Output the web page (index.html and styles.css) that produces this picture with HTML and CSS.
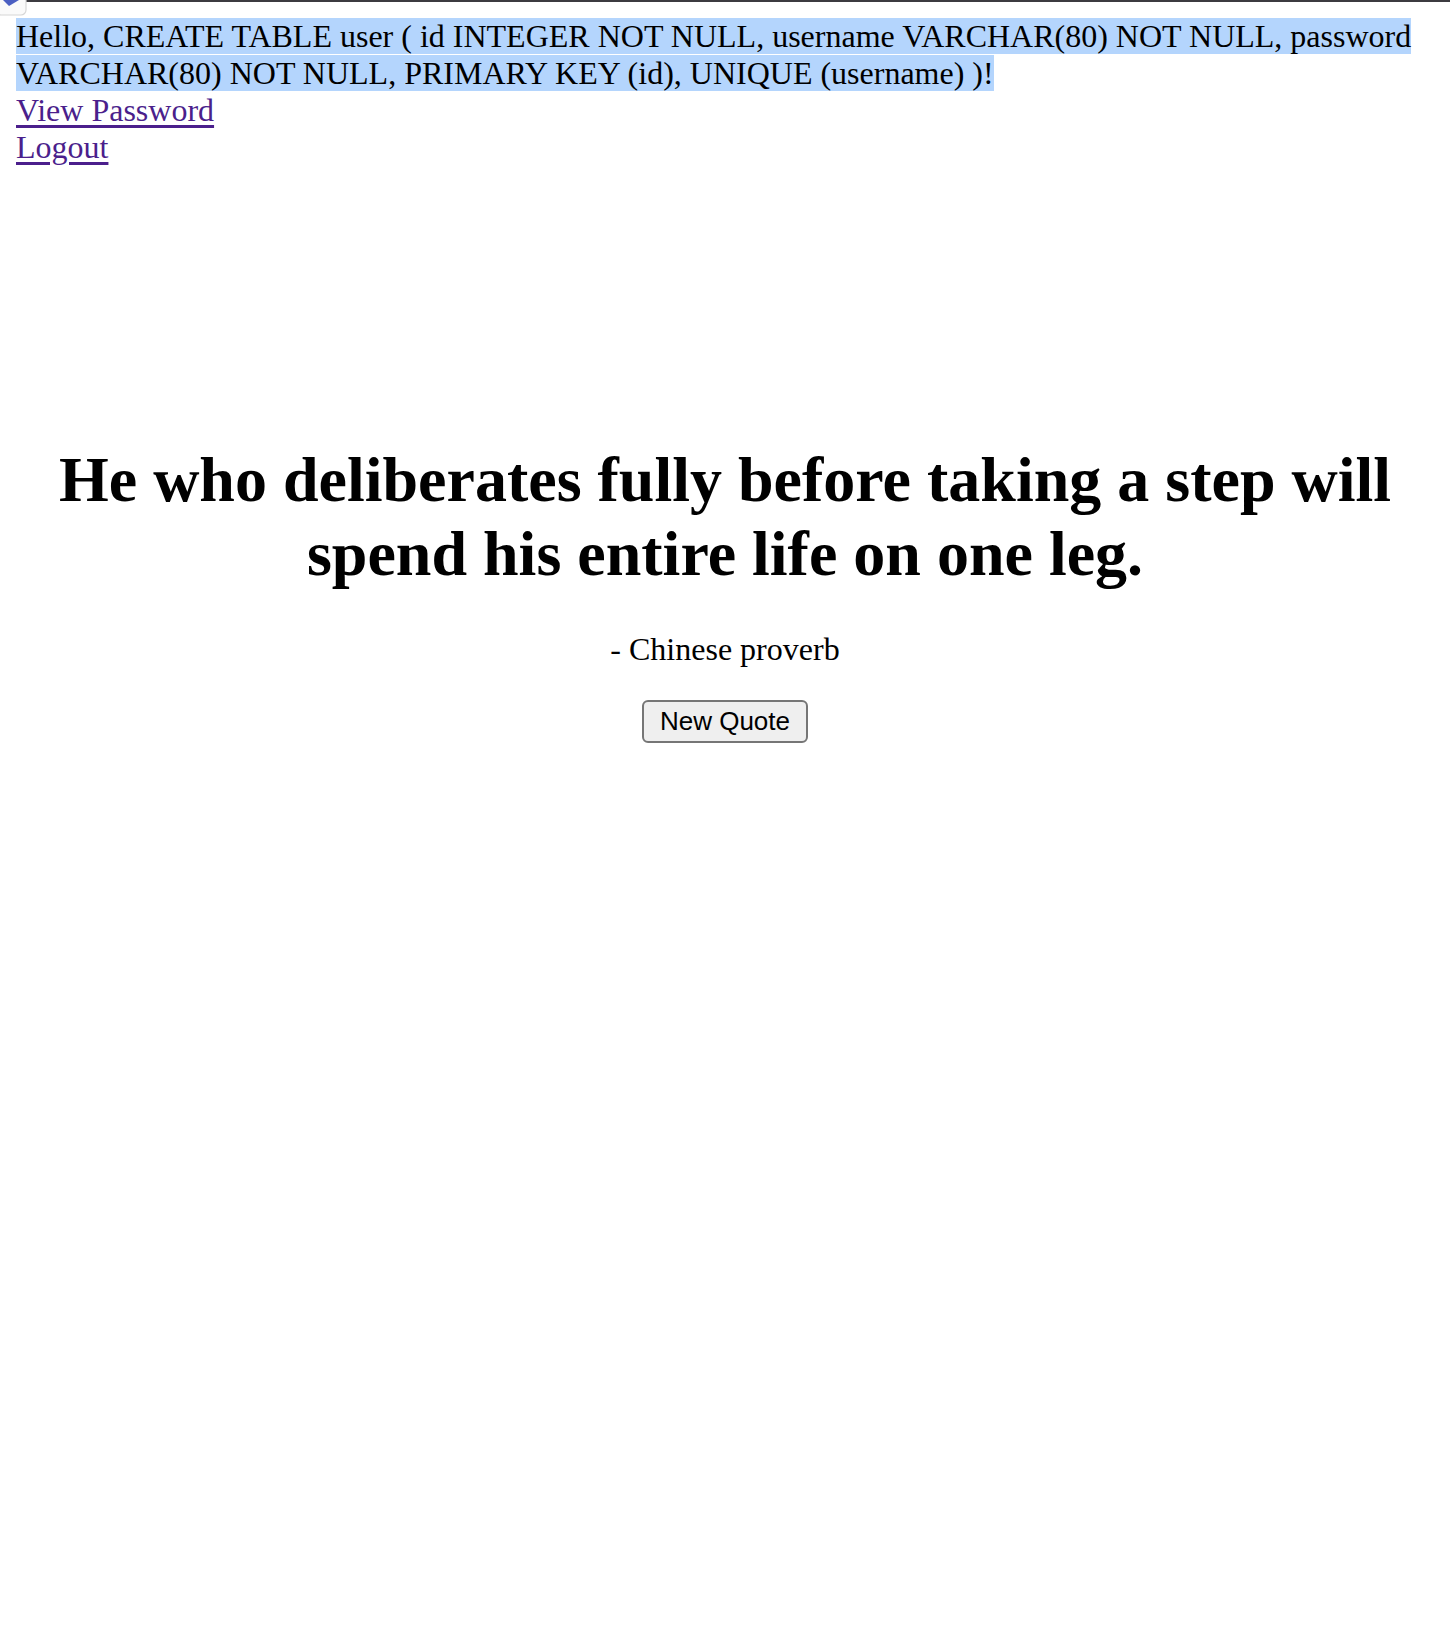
FILE: index.html
```html
<!DOCTYPE html>
<html>
<head>
<meta charset="utf-8">
<title>Quote</title>
<link rel="stylesheet" href="styles.css">
</head>
<body>
<svg class="broken-img" width="27" height="16" viewBox="0 0 27 16" aria-hidden="true">
  <rect x="-4" y="-4" width="30" height="19" rx="5" fill="#fafafa" stroke="#d6d6d6" stroke-width="1.2"/>
  <path d="M3 0 L19 0 L9 6 Z" fill="#4b5fc2"/>
</svg>
<div class="greeting"><span class="sel">Hello, CREATE TABLE user ( id INTEGER NOT NULL, username VARCHAR(80) NOT NULL, password VARCHAR(80) NOT NULL, PRIMARY KEY (id), UNIQUE (username) )!</span></div>
<div><a href="#">View Password</a></div>
<div><a href="#">Logout</a></div>
<main class="quote">
  <h1 class="quote-text">He who deliberates fully before taking a step will spend his entire life on one leg.</h1>
  <p class="author">- Chinese proverb</p>
  <button class="new-quote">New Quote</button>
</main>
</body>
</html>
```
FILE: styles.css
```css
html {
  border-top: 2px solid #3c3b40;
  background: #fff;
}
body {
  margin: 16px;
  font-family: "Liberation Serif", "Times New Roman", serif;
  font-size: 32px;
  color: #000;
}
.broken-img {
  position: absolute;
  left: 0;
  top: 0;
}
.sel {
  background: #b4d5fd;
}
a {
  color: #4b1f8c;
  text-decoration: underline;
  text-decoration-thickness: 3px;
  text-underline-offset: 4px;
}
.quote {
  text-align: center;
  margin-top: 277px;
}
.quote-text {
  font-size: 64px;
  font-weight: bold;
  margin: 43px 0 40px;
  line-height: 74px;
}
.author {
  margin: 32px 0 32px;
}
.new-quote {
  font-family: "Liberation Sans", Arial, sans-serif;
  font-size: 26px;
  width: 166px;
  height: 43px;
  background: #efefef;
  border: 2px solid #767676;
  border-radius: 6px;
  color: #000;
  padding: 0;
}
```
